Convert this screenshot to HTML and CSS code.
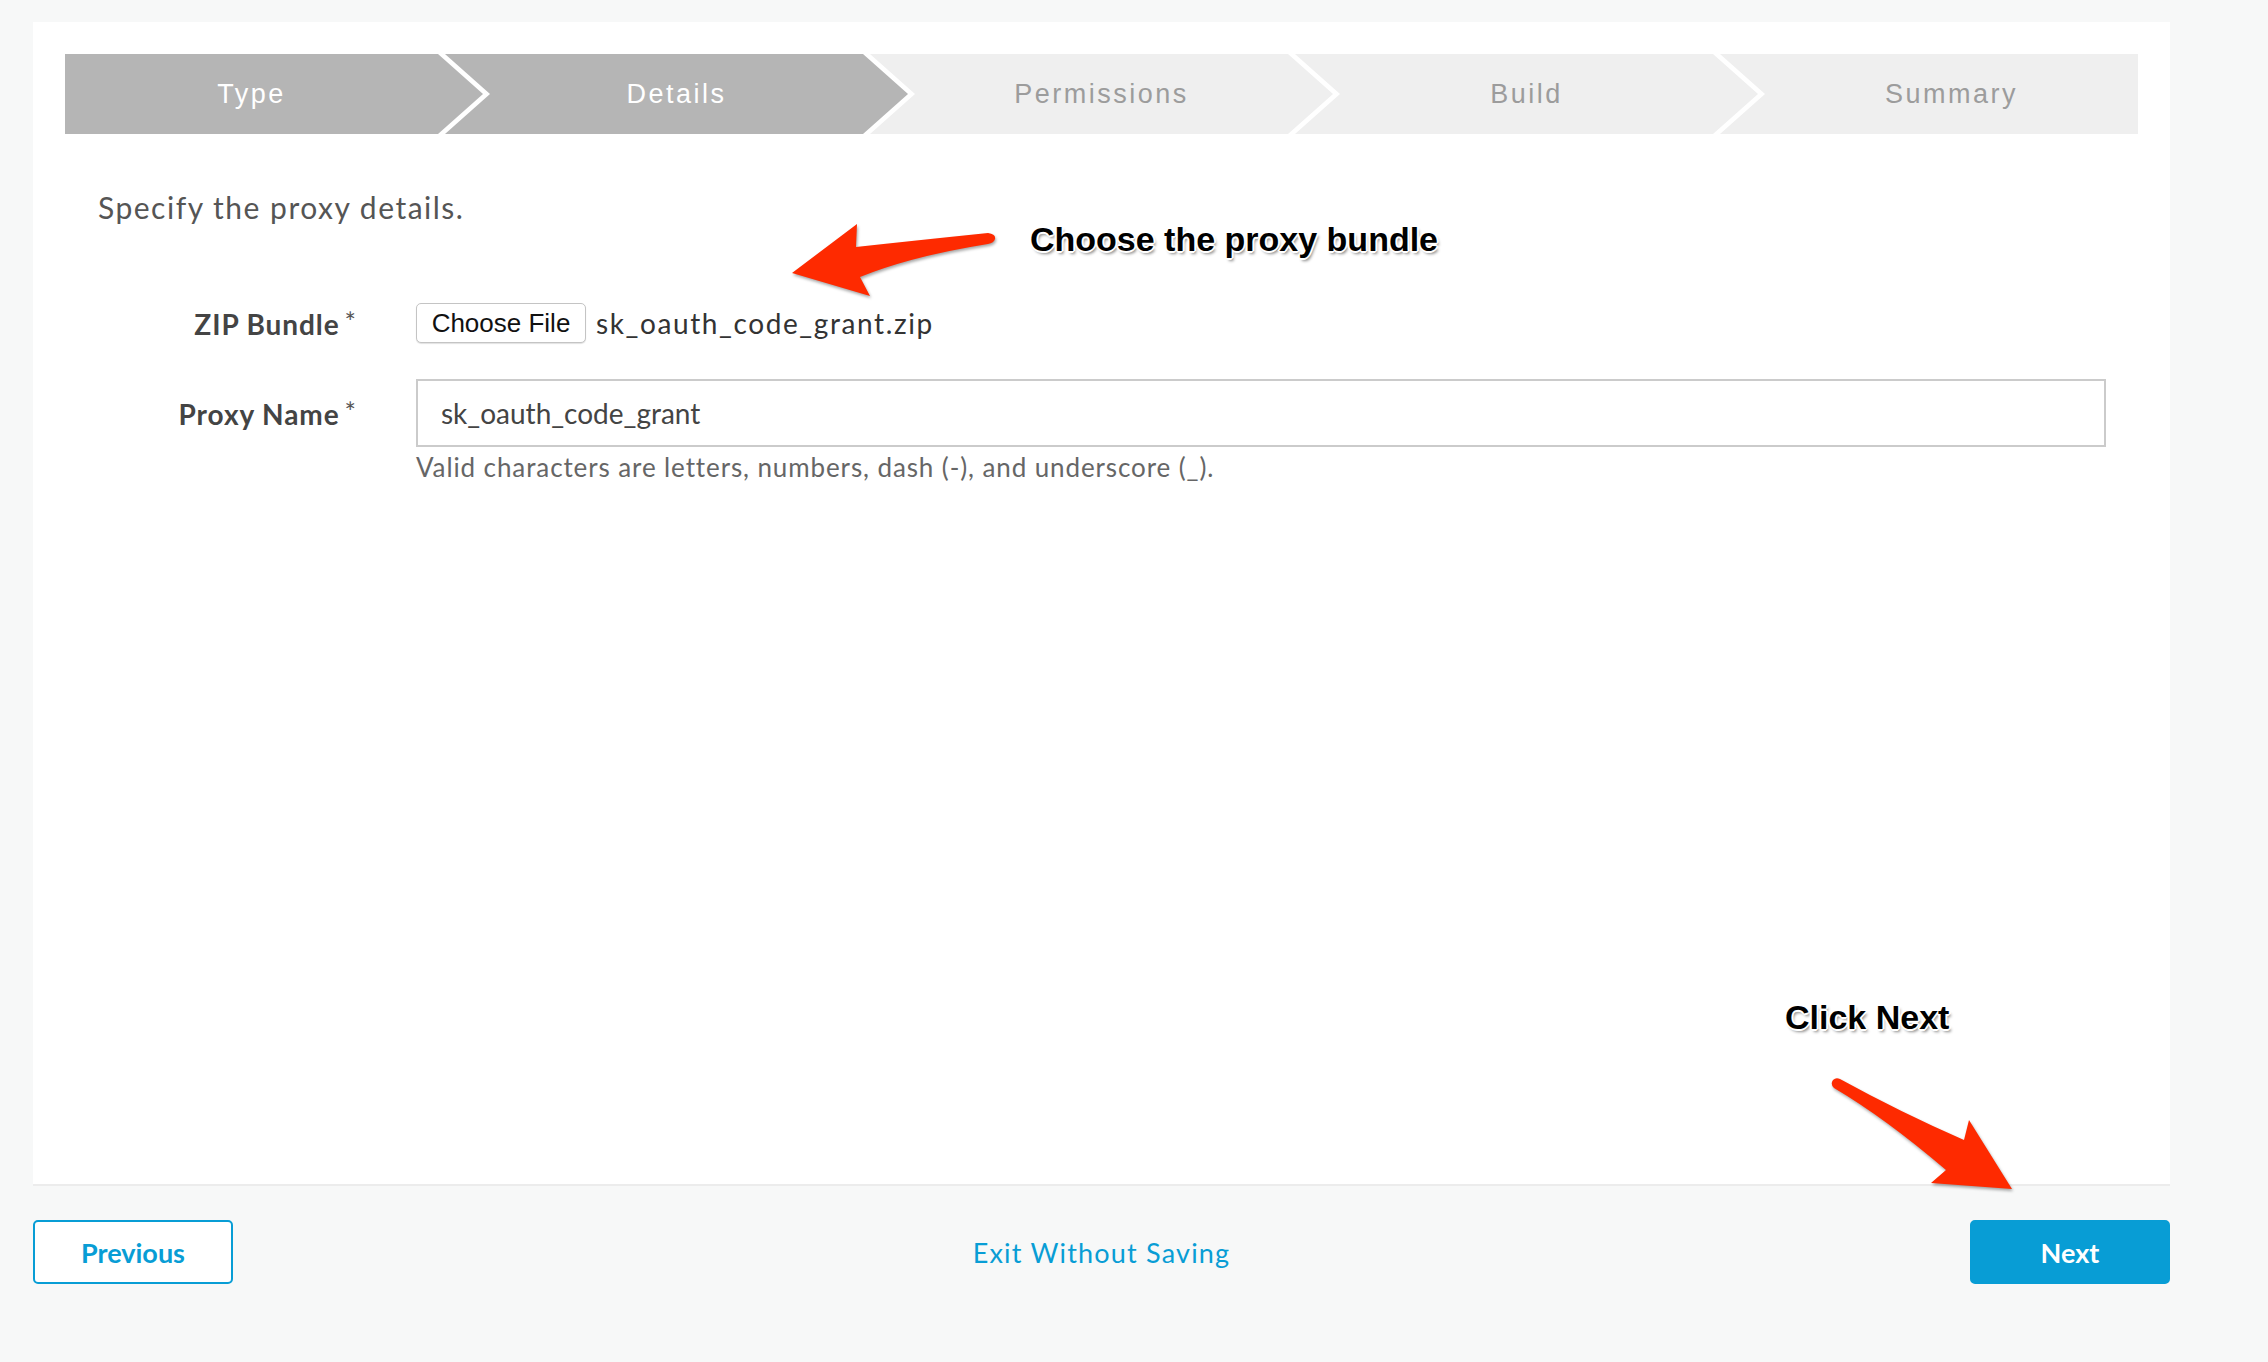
FILE: index.html
```html
<!DOCTYPE html>
<html>
<head>
<meta charset="utf-8">
<link rel="stylesheet" href="styles.css">
</head>
<body>
<div class="page">
  <div class="panel">
    <div class="stepper">
      <div class="step done">Type</div>
      <div class="step done">Details</div>
      <div class="step">Permissions</div>
      <div class="step">Build</div>
      <div class="step">Summary</div>
    </div>
    <p class="intro">Specify the proxy details.</p>
    <div class="form-row row-zip">
      <div class="label">ZIP Bundle<span class="req">*</span></div>
      <div class="field file-field">
        <span class="file-btn">Choose File</span>
        <span class="file-name">sk_oauth_code_grant.zip</span>
      </div>
    </div>
    <div class="form-row row-name">
      <div class="label">Proxy Name<span class="req">*</span></div>
      <div class="field">
        <div class="text-input">sk_oauth_code_grant</div>
      </div>
    </div>
    <div class="help">Valid characters are letters, numbers, dash (-), and underscore (_).</div>
  </div>
  <div class="footer">
    <button class="btn btn-outline">Previous</button>
    <a class="exit">Exit Without Saving</a>
    <button class="btn btn-primary">Next</button>
  </div>
</div>

<div class="note note-bundle">Choose the proxy bundle</div>
<div class="note note-next">Click Next</div>
<svg class="arrows" width="2268" height="1362" viewBox="0 0 2268 1362">
  <path d="M792,273 L857,224 L856,247 Q920,240 988,233 Q996,234 995,239 Q994,243 988,244 Q912,256 860,277 L870,296 Z" />
  <path d="M2012,1189 L1931,1183 L1946,1170 Q1885,1118 1834,1088 Q1830,1084 1833,1080 Q1836,1077 1840,1079 Q1900,1112 1964,1140 L1969,1120 Z" />
</svg>
</body>
</html>
```

FILE: styles.css
```css
html, body {
  margin: 0;
  padding: 0;
}
body {
  background: #f7f8f8;
  width: 2268px;
  height: 1362px;
  position: relative;
  overflow: hidden;
  font-family: "Lato", "Open Sans", sans-serif;
}
.page {
  width: 2137px;
  margin-left: 33px;
  padding-top: 22px;
}
.panel {
  background: #fff;
  height: 1164px;
  box-sizing: border-box;
  border-bottom: 2px solid #ececec;
  padding: 32px 32px 0 32px;
}
.stepper {
  display: flex;
  height: 80px;
}
.step {
  flex: 1 1 0;
  min-width: 0;
  height: 80px;
  display: flex;
  align-items: center;
  justify-content: center;
  padding: 0 45px;
  margin-left: -38px;
  background: #efefef;
  color: #9c9c9c;
  font-family: "Liberation Sans", Arial, sans-serif;
  font-size: 27px;
  letter-spacing: 2.5px;
  clip-path: polygon(0 0, calc(100% - 45px) 0, 100% 50%, calc(100% - 45px) 100%, 0 100%, 45px 50%);
}
.step:first-child {
  margin-left: 0;
  padding-left: 0;
  clip-path: polygon(0 0, calc(100% - 45px) 0, 100% 50%, calc(100% - 45px) 100%, 0 100%);
}
.step:last-child {
  padding-right: 0;
  clip-path: polygon(0 0, 100% 0, 100% 100%, 0 100%, 45px 50%);
}
.step.done {
  background: #b5b5b5;
  color: #fff;
}
.intro {
  margin: 56px 0 0 33px;
  font-size: 30px;
  line-height: 34px;
  letter-spacing: 1.5px;
  color: #555;
}
.form-row {
  display: flex;
  align-items: center;
}
.row-zip {
  margin-top: 79px;
  height: 40px;
}
.row-name {
  margin-top: 36px;
}
.label {
  width: 291px;
  flex: none;
  text-align: right;
  font-weight: 700;
  font-size: 28px;
  letter-spacing: 0.9px;
  color: #444;
  margin-right: 60px;
  white-space: nowrap;
}
.req {
  font-weight: 400;
  font-size: 27px;
  margin-left: 5px;
  letter-spacing: 0;
  vertical-align: 3px;
  color: #555;
}
.field {
  flex: 1;
  min-width: 0;
  padding-right: 32px;
}
.file-field {
  display: flex;
  align-items: center;
}
.file-btn {
  display: inline-flex;
  align-items: center;
  justify-content: center;
  box-sizing: border-box;
  width: 170px;
  height: 40px;
  border: 1px solid #c4c4c4;
  border-radius: 5px;
  background: #fff;
  box-shadow: 0 1px 1px rgba(0, 0, 0, 0.12);
  font-family: "Liberation Sans", Arial, sans-serif;
  font-size: 26px;
  color: #111;
}
.file-name {
  margin-left: 10px;
  font-size: 28px;
  letter-spacing: 1.6px;
  color: #333;
}
.text-input {
  box-sizing: border-box;
  height: 68px;
  border: 2px solid #cbcbcb;
  padding-left: 23px;
  display: flex;
  align-items: center;
  font-size: 28px;
  color: #444;
}
.help {
  margin: 5px 0 0 351px;
  font-size: 26px;
  line-height: 30px;
  letter-spacing: 0.9px;
  color: #666;
}
.footer {
  display: flex;
  justify-content: space-between;
  align-items: center;
  padding-top: 34px;
}
.btn {
  box-sizing: border-box;
  width: 200px;
  height: 64px;
  border-radius: 5px;
  font-family: "Lato", sans-serif;
  font-weight: 700;
  font-size: 27px;
}
.btn-outline {
  background: #fff;
  border: 2px solid #089dd5;
  color: #089dd5;
}
.btn-primary {
  background: #089dd5;
  border: 2px solid #089dd5;
  color: #fff;
}
.exit {
  font-size: 27px;
  letter-spacing: 1.2px;
  color: #089dd5;
}
.note {
  position: absolute;
  font-family: "Liberation Sans", Arial, sans-serif;
  font-weight: 700;
  font-size: 34px;
  line-height: 40px;
  color: #000;
  white-space: nowrap;
  text-shadow: 1px 1px 0 #fff, -1px -1px 0 #fff, 1px -1px 0 #fff, -1px 1px 0 #fff, 0 2px 0 #fff, 2px 0 0 #fff, 0 -2px 0 #fff, -2px 0 0 #fff, 2px 3px 3px rgba(0, 0, 0, 0.45);
}
.note-bundle {
  left: 1030px;
  top: 219px;
}
.note-next {
  left: 1785px;
  top: 997px;
}
.arrows {
  position: absolute;
  left: 0;
  top: 0;
  pointer-events: none;
}
.arrows path {
  fill: #fe2a00;
  filter: drop-shadow(1px 2px 1.5px rgba(0, 0, 0, 0.35));
}
```
